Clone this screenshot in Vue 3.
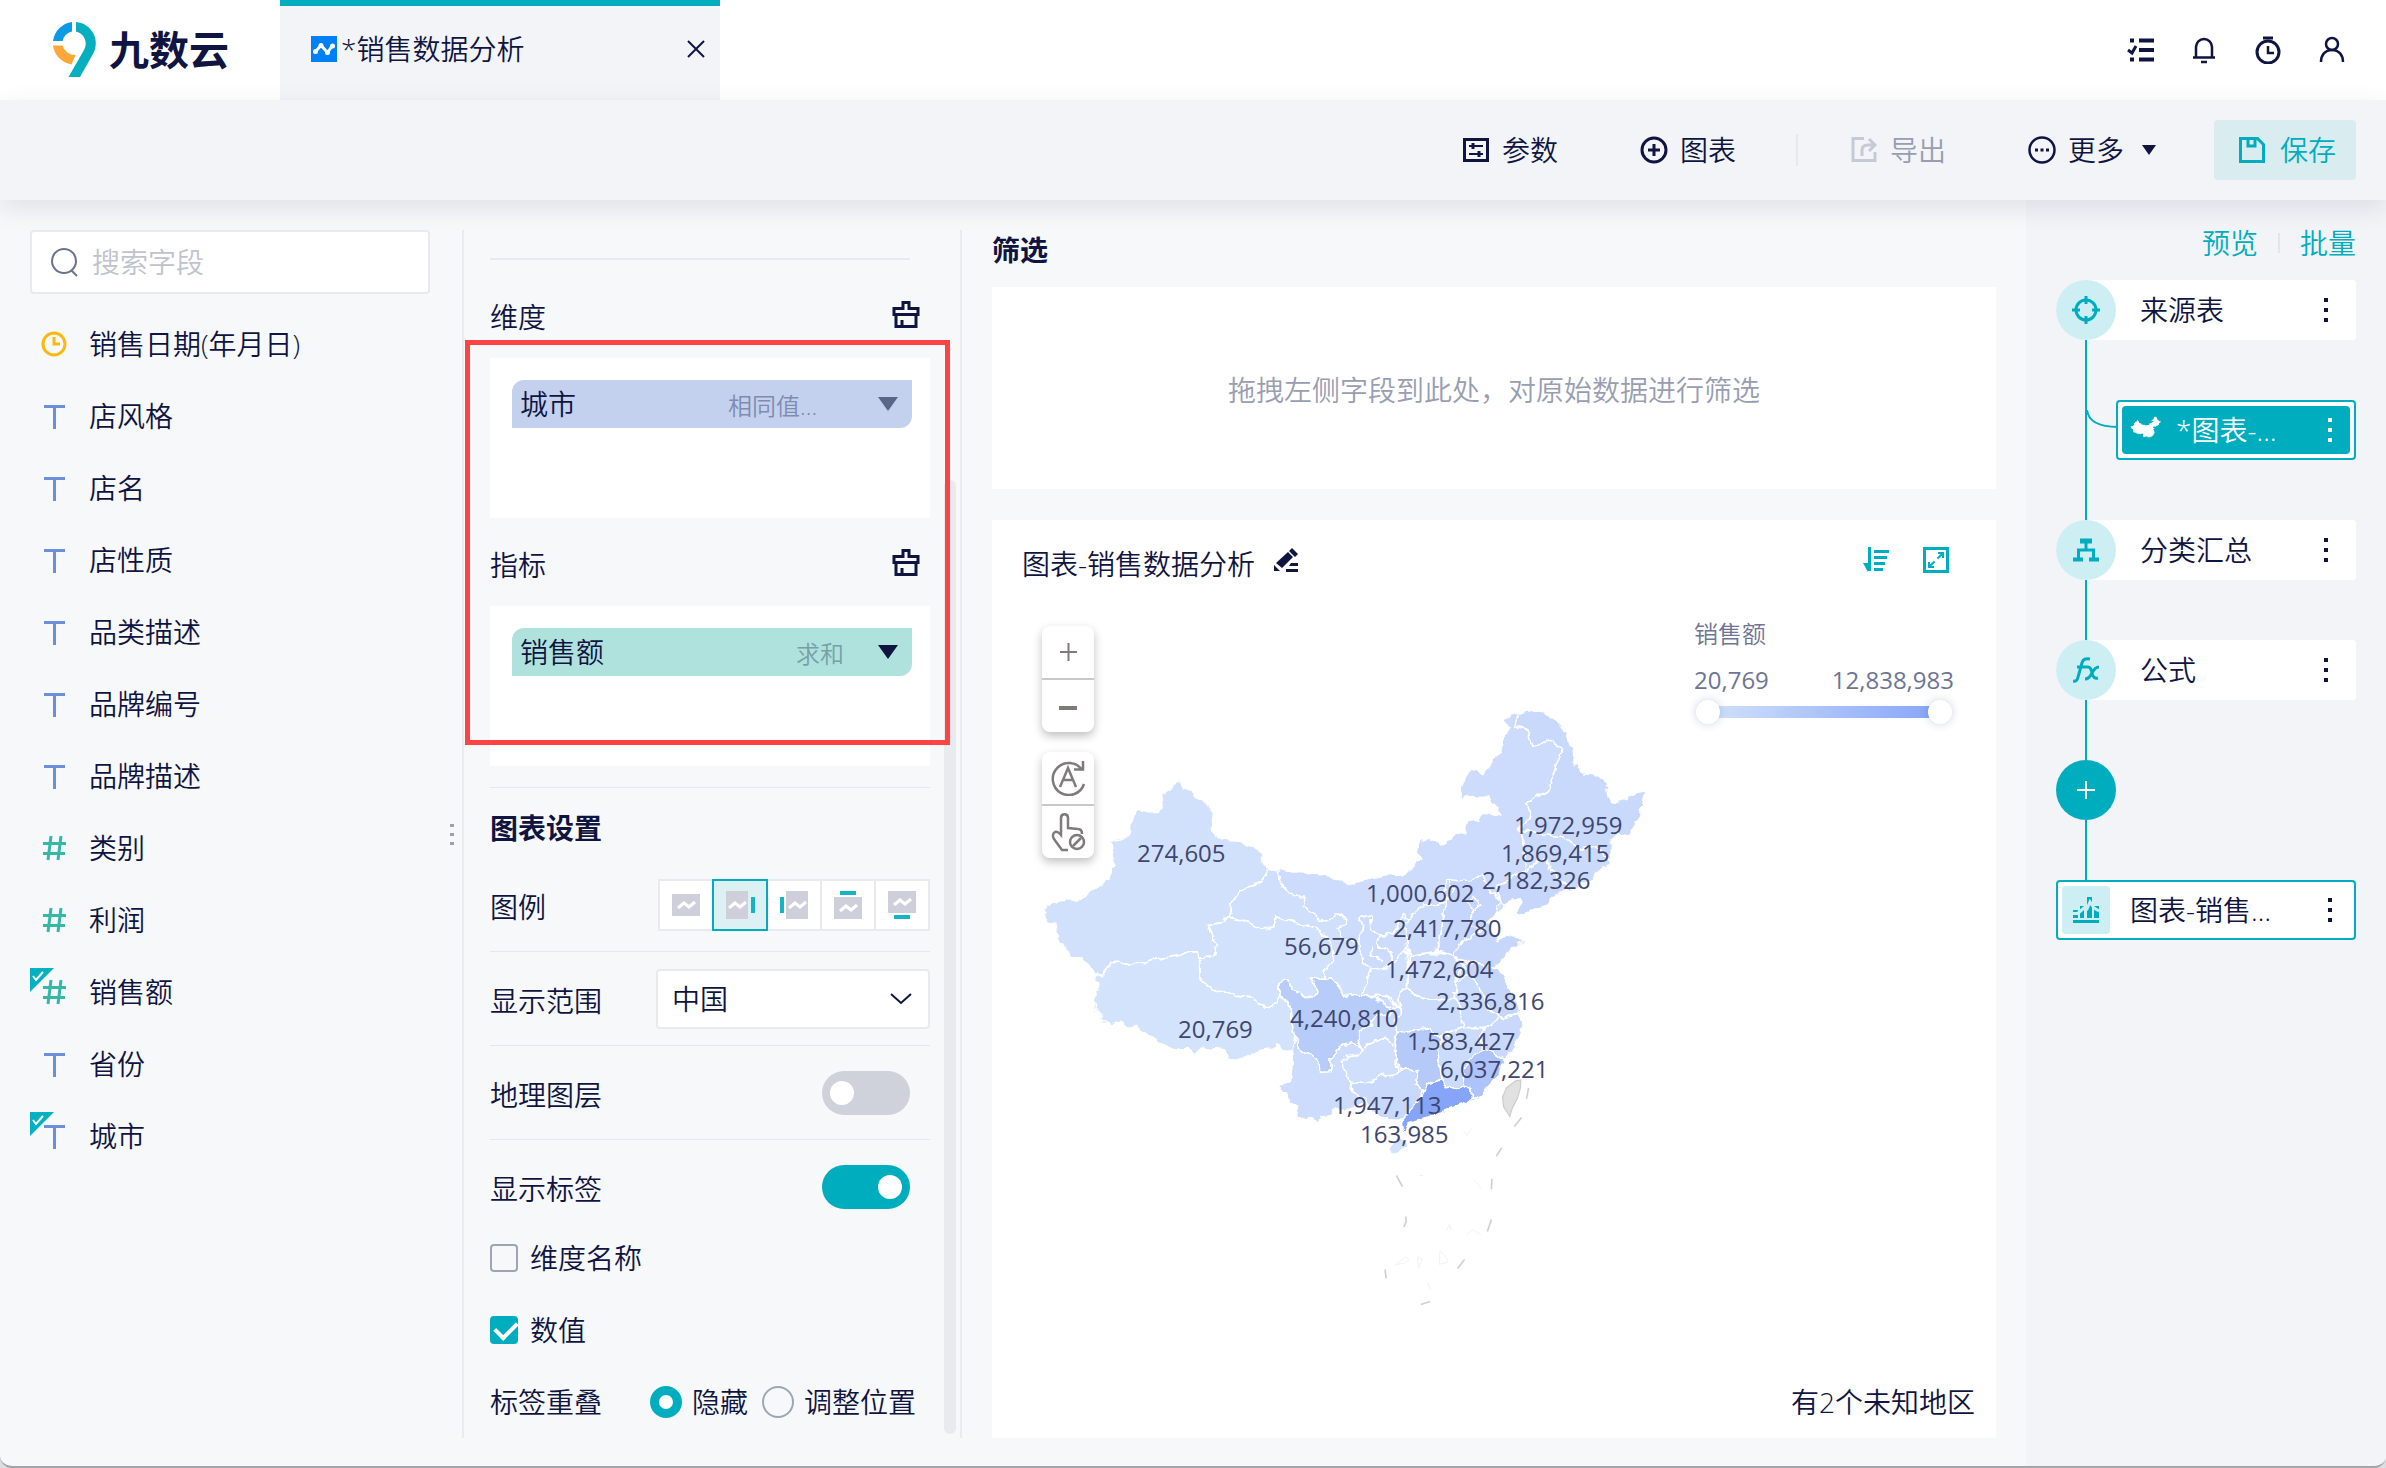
<script setup>
import { ref } from 'vue'

const fields = [
  { name: '销售日期(年月日)', type: 'date' },
  { name: '店风格', type: 'text' },
  { name: '店名', type: 'text' },
  { name: '店性质', type: 'text' },
  { name: '品类描述', type: 'text' },
  { name: '品牌编号', type: 'text' },
  { name: '品牌描述', type: 'text' },
  { name: '类别', type: 'number' },
  { name: '利润', type: 'number' },
  { name: '销售额', type: 'number', used: true },
  { name: '省份', type: 'text' },
  { name: '城市', type: 'text', used: true },
]

const keyword = ref('')
const region = ref('中国')
const geoLayer = ref(false)
const showLabel = ref(true)
const showDimension = ref(false)
const showValue = ref(true)
const overlap = ref('hide')
const legendPos = ref('right')
const rangeMin = ref(0)
const rangeMax = ref(100)

const legendOptions = [
  { id: 'none', label: '无图例', x: 4, y: 6, w: 28, h: 22 },
  { id: 'right', label: '右侧', x: 4, y: 3, w: 22, h: 28, bar: [29, 9, 4, 16] },
  { id: 'left', label: '左侧', x: 10, y: 3, w: 22, h: 28, bar: [4, 9, 4, 16] },
  { id: 'top', label: '上方', x: 4, y: 9, w: 28, h: 22, bar: [10, 3, 16, 4] },
  { id: 'bottom', label: '下方', x: 4, y: 3, w: 28, h: 22, bar: [10, 27, 16, 4] },
]

const outline =
  '34,548 42,528 75,515 80,522 105,517 130,500 160,485 195,462 197,435 207,430 200,400 195,368 218,360 245,358 247,330 262,292 290,298 315,297 323,285 325,255 345,243 355,222 372,222 378,238 405,262 425,268 440,290 450,305 443,345 455,358 480,366 515,368 540,382 565,400 575,425 583,440 605,442 650,448 700,446 750,465 790,478 820,468 870,457 915,455 935,435 965,410 952,395 958,368 985,372 1005,382 1025,368 1065,350 1080,325 1110,310 1150,308 1156,300 1145,285 1120,260 1090,258 1060,266 1053,255 1060,235 1078,198 1105,205 1140,180 1145,155 1165,118 1178,85 1162,78 1180,60 1200,55 1240,48 1275,62 1300,78 1315,105 1328,150 1338,190 1355,203 1385,205 1415,238 1422,268 1455,272 1480,255 1512,248 1495,300 1470,358 1440,350 1425,370 1425,430 1400,440 1380,465 1355,475 1335,490 1300,495 1260,530 1230,538 1195,552 1190,545 1208,520 1200,508 1180,520 1160,530 1150,545 1125,565 1130,590 1145,612 1165,600 1190,605 1215,615 1212,622 1185,632 1160,655 1140,680 1165,705 1180,745 1195,775 1200,795 1185,805 1205,815 1213,820 1200,835 1195,860 1175,890 1160,910 1150,940 1130,962 1105,990 1080,1010 1040,1025 1000,1040 960,1050 925,1062 918,1082 912,1085 908,1060 912,1050 890,1050 860,1048 835,1030 820,1010 785,1022 750,1030 740,1040 710,1045 705,1060 695,1047 675,1052 655,1045 660,1020 640,1010 618,985 617,970 640,955 645,920 640,885 620,885 608,872 585,880 555,885 520,905 485,908 478,885 460,880 425,878 405,895 400,882 365,882 330,870 295,850 260,825 240,830 220,815 200,822 180,810 165,792 155,775 152,755 165,745 158,710 160,697 143,680 140,665 120,655 100,655 90,632 65,617 67,600 60,575 40,570'

const provinces = [
  { fill: '#d1e1fb', d: '34,548 42,528 75,515 105,517 160,485 195,462 197,435 207,430 200,400 195,368 245,358 247,330 262,292 290,298 315,297 323,285 325,255 345,243 355,222 372,222 378,238 405,262 425,268 440,290 450,305 443,345 455,358 480,366 515,368 540,382 565,400 583,440 578,460 555,468 520,490 497,520 490,555 470,570 435,578 447,600 445,615 460,625 450,635 455,650 418,655 415,642 380,642 340,655 290,668 245,672 215,665 190,678 180,697 160,697 143,680 140,665 100,655 90,632 65,617 67,600 60,575 40,570' },
  { fill: '#d3e3fc', d: '160,697 180,697 190,678 215,665 245,672 290,668 340,655 380,642 415,642 420,710 445,735 500,748 545,752 575,778 608,768 608,745 635,770 640,800 648,850 640,885 620,885 608,872 585,880 555,885 520,905 485,908 478,885 425,878 405,895 400,882 365,882 330,870 295,850 260,825 240,830 220,815 200,822 165,792 152,755 165,745 158,710' },
  { fill: '#d3e2fc', d: '435,578 470,570 490,555 530,570 580,585 600,580 600,555 640,565 680,580 735,605 745,640 740,665 720,690 722,710 690,705 705,730 700,745 670,752 640,730 628,710 608,715 608,768 575,778 545,752 500,748 445,735 420,710 418,655 455,650 450,635 460,625 445,615 447,600' },
  { fill: '#d0dffb', d: '583,440 605,442 618,480 645,505 675,505 670,530 700,550 710,568 740,555 770,548 772,575 755,590 770,610 808,612 812,650 815,672 835,680 830,710 815,752 770,745 740,705 722,710 720,690 740,665 745,640 735,605 680,580 640,565 600,555 600,580 580,585 530,570 490,555 497,520 520,490 555,468 578,460' },
  { fill: '#c9d9fb', d: '1200,55 1240,48 1275,62 1300,78 1315,105 1328,150 1338,190 1355,203 1385,205 1415,238 1422,268 1455,272 1480,255 1512,248 1495,300 1470,358 1440,350 1425,370 1425,430 1385,385 1350,390 1320,370 1285,358 1230,350 1200,340 1230,305 1215,280 1270,245 1285,200 1303,150 1285,125 1230,135 1222,105 1188,85' },
  { fill: '#cadafb', d: '1200,340 1230,350 1285,358 1320,370 1350,390 1385,385 1425,420 1425,430 1400,440 1380,465 1355,475 1335,490 1300,470 1260,415 1215,440 1210,380' },
  { fill: '#c7d7fb', d: '1215,440 1260,415 1300,470 1335,490 1300,495 1260,530 1195,552 1190,545 1208,520 1200,508 1160,530 1150,520 1145,480 1180,460' },
  { fill: '#c5d5fb', d: '1020,520 1040,490 1030,465 1080,470 1105,450 1120,470 1150,520 1145,545 1125,565 1110,595 1080,600 1050,625 1040,650 1000,640 1010,580' },
  { fill: '#cbdbfb', d: '925,560 960,530 1020,520 1010,580 1000,640 930,650 920,600' },
  { fill: '#c7d7fb', d: '1040,650 1050,625 1080,600 1110,595 1125,570 1145,612 1165,600 1215,615 1185,632 1160,655 1140,680 1085,670' },
  { fill: '#cddcfb', d: '930,650 1000,645 1040,650 1060,670 1045,710 1040,755 1000,760 950,750 925,730' },
  { fill: '#c6d6fb', d: '1060,670 1085,670 1140,680 1165,705 1180,745 1195,775 1200,795 1150,805 1120,780 1110,740 1080,700' },
  { fill: '#cbdbfb', d: '1045,710 1080,700 1110,740 1120,780 1150,805 1115,830 1060,830 1060,800 1040,755' },
  { fill: '#cbdbfb', d: '905,740 925,730 950,750 1000,760 1040,755 1060,800 1060,830 1005,850 980,830 900,840 890,820 905,800 905,775' },
  { fill: '#cfdffc', d: '838,685 870,680 925,640 925,730 905,740 905,775 870,750 815,752 830,710' },
  { fill: '#cad9fb', d: '1115,830 1150,805 1200,795 1213,820 1195,860 1160,910 1120,880 1110,885 1100,850' },
  { fill: '#cbdbfb', d: '1005,850 1060,830 1115,830 1100,850 1110,885 1090,890 1065,930 1060,970 1020,975 1010,955 1000,890' },
  { fill: '#cddcfb', d: '880,775 905,775 905,800 890,820 900,840 895,880 870,850 830,865 810,885 805,838 830,825 850,800 890,790' },
  { fill: '#b8ccf9', d: '608,715 628,710 640,730 670,752 700,745 705,730 690,705 720,710 740,705 770,745 815,752 845,755 880,775 890,790 850,800 830,825 805,838 810,885 795,865 765,868 740,900 740,930 717,932 690,895 660,875 655,860 648,850 640,800 635,770 608,745' },
  { fill: '#cfdffc', d: '760,905 800,895 830,865 870,850 895,880 900,940 870,945 820,965 785,970 775,935' },
  { fill: '#c9d9fb', d: '785,970 820,965 870,945 900,940 905,925 950,935 945,965 965,980 950,1010 930,1035 912,1050 860,1048 835,1030 820,1000 790,985' },
  { fill: '#b6caf9', d: '900,840 930,835 980,830 1005,850 1000,890 1010,955 975,965 965,980 945,965 950,935 905,925 895,880' },
  { fill: '#aec3f9', d: '1090,890 1120,880 1160,910 1150,940 1130,962 1105,990 1082,1000 1080,980 1060,970 1065,930' },
  { fill: '#86a4f8', d: '965,980 975,965 1010,955 1020,975 1060,970 1080,980 1082,1000 1070,1015 1040,1025 1000,1040 925,1062 918,1082 910,1085 908,1060 930,1035 950,1010' },
  { fill: '#d2e1fc', d: '885,1108 905,1100 925,1105 925,1120 905,1137 885,1130' },
]

const borders = [
  '770,610 808,612 815,560 835,553 838,585 855,600 850,625 880,645 880,680 838,685',
  '855,600 890,600 912,550 925,560',
  '835,625 838,650 865,665',
  '1020,520 1020,470 1030,465',
  '1070,520 1085,500 1105,530 1085,545 1070,520',
  '1085,545 1080,580 1110,595',
  '1150,520 1145,480 1180,460 1215,440',
]

const dashes = [
  '1222,975 1217,1002', '1205,1048 1187,1070', '1156,1122 1143,1143', '1132,1198 1131,1224',
  '1131,1298 1121,1327', '1065,1396 1048,1418', '958,1506 981,1499', '870,1420 873,1442',
  '921,1290 922,1303 916,1316', '898,1190 913,1217',
]

const labels = [
  { t: '274,605', x: 107, y: 172 },
  { t: '1,972,959', x: 484, y: 144 },
  { t: '1,869,415', x: 471, y: 172 },
  { t: '2,182,326', x: 452, y: 199 },
  { t: '1,000,602', x: 336, y: 212 },
  { t: '2,417,780', x: 363, y: 247 },
  { t: '56,679', x: 254, y: 265 },
  { t: '1,472,604', x: 355, y: 288 },
  { t: '2,336,816', x: 406, y: 320 },
  { t: '4,240,810', x: 260, y: 337 },
  { t: '20,769', x: 148, y: 348 },
  { t: '1,583,427', x: 377, y: 360 },
  { t: '6,037,221', x: 410, y: 388 },
  { t: '1,947,113', x: 303, y: 424 },
  { t: '163,985', x: 330, y: 453 },
]
</script>

<template>
  <div class="app">
    <header class="topbar">
      <div class="logo">
        <svg width="44" height="56" viewBox="0 0 44 56">
          <path d="M19 0v9.500a13 13 0 0 0-9.500 9.500H0A22 22 0 0 1 19 0Z" fill="#0a9ae6" />
          <path d="M0 23.500h9.500A13 13 0 0 0 22.500 33l-4 9.500A22 22 0 0 1 0 23.500Z" fill="#fba73a" />
          <path d="M23 0a21.500 21.500 0 0 1 17 32L27 55H15.500L31 28a12.500 12.500 0 0 0-8-18.500Z" fill="#06afbf" />
        </svg>
        <span>九数云</span>
      </div>
      <div class="tab">
        <svg width="26" height="26" viewBox="0 0 26 26">
          <path d="M0 0h26v26H0z" fill="#0080f5" />
          <path d="M4.500 15.500 10 9.500l6.500 7 5-7" fill="none" stroke="#fff" stroke-width="3" stroke-linejoin="round" />
          <g fill="#fff"><circle cx="4.500" cy="15.500" r="2.500" /><circle cx="10" cy="9.500" r="2.500" /><circle cx="16.500" cy="16.500" r="2.500" /><circle cx="21.500" cy="10" r="2.500" /></g>
        </svg>
        <span>*销售数据分析</span>
        <button class="close" aria-label="关闭">
          <svg width="20" height="20" viewBox="0 0 20 20" fill="none" stroke="currentColor" stroke-width="2"><path d="M2 2l16 16M18 2 2 18" /></svg>
        </button>
      </div>
      <nav class="top-icons">
        <button aria-label="任务">
          <svg width="28" height="28" viewBox="0 0 28 28" fill="none" stroke="currentColor" stroke-width="4"><path d="M13 4.500h15M13 14h15M13 23.500h15M4 4.500h4M4 23.500h4" /><path d="m2 14 4 3 4-7" stroke-width="3" /></svg>
        </button>
        <button aria-label="通知">
          <svg width="28" height="28" viewBox="0 0 28 28" fill="none" stroke="currentColor" stroke-width="2.500"><path d="M6 21v-10a8 8 0 0 1 16 0v10M3 21.500h22M11 26h6" /></svg>
        </button>
        <button aria-label="定时">
          <svg width="28" height="28" viewBox="0 0 28 28" fill="none" stroke="currentColor" stroke-width="2.500"><circle cx="14" cy="16" r="11" stroke-width="3" /><path d="M9 2h10" stroke-width="3" /><path d="M14 10v7h6" /></svg>
        </button>
        <button aria-label="用户">
          <svg width="28" height="28" viewBox="0 0 28 28" fill="none" stroke="currentColor" stroke-width="2.500"><circle cx="14" cy="8" r="6" /><path d="M3 26c0-7 4-12 11-12s11 5 11 12" /></svg>
        </button>
      </nav>
    </header>

    <div class="toolbar">
      <button class="tool">
        <svg width="28" height="28" viewBox="0 0 28 28" fill="none" stroke="currentColor" stroke-width="3"><path d="M2.500 3.500h23v21h-23z" /><path d="M7 10h14M7 18h14" stroke-width="2" /><path d="M11 7v6M17 15v6" /></svg>
        <span>参数</span>
      </button>
      <button class="tool tool-chart">
        <svg width="28" height="28" viewBox="0 0 28 28" fill="none" stroke="currentColor" stroke-width="3"><circle cx="14" cy="14" r="12" /><path d="M8 14h12M14 8v12" /></svg>
        <span>图表</span>
      </button>
      <i class="sep"></i>
      <button class="tool tool-export" disabled>
        <svg width="28" height="28" viewBox="0 0 28 28" fill="none" stroke="#c6cad6" stroke-width="3"><path d="M14 2.500H3v22h22V16" /><path d="M12 20v-6q0-5 6-5h6M19 3l6 6-6 6" /></svg>
        <span>导出</span>
      </button>
      <button class="tool tool-more">
        <svg width="28" height="28" viewBox="0 0 28 28" fill="none" stroke="currentColor" stroke-width="2.500"><circle cx="14" cy="14" r="12.500" /><path d="M7 14h3M12.500 14h3M18 14h3" stroke-width="3" /></svg>
        <span>更多</span>
        <svg class="caret" width="14" height="10" viewBox="0 0 14 10"><path d="M0 0h14L7 10z" fill="currentColor" /></svg>
      </button>
      <button class="save">
        <svg width="28" height="28" viewBox="0 0 28 28" fill="none" stroke="currentColor" stroke-width="3"><path d="M2.500 2.500h17l6 6v17h-23z" /><path d="M10 3v7h7V3" /></svg>
        <span>保存</span>
      </button>
    </div>

    <main class="body">
      <aside class="fields">
        <label class="search">
          <svg width="30" height="30" viewBox="0 0 30 30" fill="none" stroke="#6b728e" stroke-width="2"><circle cx="14" cy="14" r="12" /><path d="m21 23 6 6" /></svg>
          <input v-model="keyword" type="text" placeholder="搜索字段" aria-label="搜索字段" />
        </label>
        <ul>
          <li v-for="f in fields" :key="f.name">
            <svg v-if="f.used" class="badge" width="24" height="24" viewBox="0 0 24 24"><path d="M0 0h24L0 24z" fill="#05b0c0" /><path d="m3 8 3 4 7-8" fill="none" stroke="#fff" stroke-width="2" /></svg>
            <svg v-if="f.type === 'date'" class="glyph" width="26" height="26" viewBox="0 0 26 26" fill="none" stroke="#fcb90d" stroke-width="3"><circle cx="13" cy="13" r="11" /><path d="M13 6v7h6" /></svg>
            <svg v-else-if="f.type === 'text'" class="glyph" width="26" height="26" viewBox="0 0 26 26" fill="none" stroke="#6b8fdc" stroke-width="3"><path d="M3 3.500h21" /><path d="M13.500 3v23" /></svg>
            <svg v-else class="glyph" width="26" height="26" viewBox="0 0 26 26" fill="none" stroke="#35b8a6" stroke-width="3"><path d="M2 8.500h23M2 18.500h22M10 1 7 25M20 1l-3 24" /></svg>
            <span>{{ f.name }}</span>
          </li>
        </ul>
        <div class="grip"><i></i><i></i><i></i></div>
      </aside>

      <section class="config">
        <hr class="top-line" />
        <template v-for="zone in [{ title: '维度', field: '城市', agg: '相同值…', cls: 'dim' }, { title: '指标', field: '销售额', agg: '求和', cls: 'metric' }]" :key="zone.title">
          <div class="zone-head">
            <span>{{ zone.title }}</span>
            <button aria-label="清空">
              <svg width="28" height="28" viewBox="0 0 28 28" fill="none" stroke="currentColor" stroke-width="3"><path d="M11 7.500v-6h6v6h9v6H2v-6zM4 13.500v12h20v-12M10 25v-6" /></svg>
            </button>
          </div>
          <div class="zone">
            <div class="chip" :class="zone.cls">
              <span>{{ zone.field }}</span>
              <small>{{ zone.agg }}</small>
              <button aria-label="展开"><svg width="20" height="14" viewBox="0 0 20 14"><path d="M0 0h20L10 14z" fill="currentColor" /></svg></button>
            </div>
          </div>
        </template>

        <div class="settings">
          <h2>图表设置</h2>
          <div class="row">
            <span class="name">图例</span>
            <div class="legend-pos">
              <button v-for="o in legendOptions" :key="o.id" :aria-label="o.label" :class="{ active: legendPos === o.id }" @click="legendPos = o.id">
                <svg width="36" height="34" viewBox="0 0 36 34">
                  <rect :x="o.x" :y="o.y" :width="o.w" :height="o.h" fill="#cfcfdb" />
                  <path :d="`M${o.x + o.w / 2 - 8} ${o.y + o.h / 2 + 3}l6-5 5 4 6-5`" fill="none" stroke="#fff" stroke-width="3" />
                  <rect v-if="o.bar" :x="o.bar[0]" :y="o.bar[1]" :width="o.bar[2]" :height="o.bar[3]" fill="#14b4c4" />
                </svg>
              </button>
            </div>
          </div>
          <div class="row">
            <label class="name" for="region">显示范围</label>
            <div class="select">
              <select id="region" v-model="region"><option>中国</option></select>
              <svg width="22" height="12" viewBox="0 0 22 12" fill="none" stroke="currentColor" stroke-width="2"><path d="m1 1 10 9L21 1" /></svg>
            </div>
          </div>
          <div class="row">
            <label class="name" for="geo">地理图层</label>
            <input id="geo" v-model="geoLayer" class="switch" type="checkbox" role="switch" />
          </div>
          <div class="row last">
            <label class="name" for="show">显示标签</label>
            <input id="show" v-model="showLabel" class="switch" type="checkbox" role="switch" />
          </div>
          <label class="check"><input v-model="showDimension" type="checkbox" /><span>维度名称</span></label>
          <label class="check"><input v-model="showValue" type="checkbox" /><span>数值</span></label>
          <div class="overlap">
            <span>标签重叠</span>
            <label><input v-model="overlap" type="radio" name="overlap" value="hide" />隐藏</label>
            <label><input v-model="overlap" type="radio" name="overlap" value="move" />调整位置</label>
          </div>
        </div>
        <div class="scrollbar"></div>
        <div class="highlight"></div>
      </section>

      <section class="center">
        <h2>筛选</h2>
        <div class="filter">拖拽左侧字段到此处，对原始数据进行筛选</div>
        <div class="card">
          <div class="card-head">
            <span>图表-销售数据分析</span>
            <button aria-label="重命名">
              <svg width="26" height="26" viewBox="0 0 26 26" fill="currentColor"><path d="m3 16 12-11 5 5L9 21zM1 18l6 6H1zM16 4l3-3 6 6-3 3zM18 16h7v3h-9zM13 22h12v3H13z" /></svg>
            </button>
            <button class="sort" aria-label="排序">
              <svg width="26" height="26" viewBox="0 0 26 26" fill="none" stroke="currentColor" stroke-width="3"><path d="M6.500 0v24" /><path d="M0 16h5v9z" fill="currentColor" stroke="none" /><path d="M11 4.500h15M11 10.500h13M11 16.500h11M11 22.500h9" /></svg>
            </button>
            <button class="full" aria-label="全屏">
              <svg width="26" height="26" viewBox="0 0 26 26" fill="none" stroke="currentColor"><path d="M1.500 1.500h23v23h-23z" stroke-width="3" /><path d="m14.500 11.500 6-6M15 6h5v5M11.500 14.500l-6 6M6 15v5h5" stroke-width="2" /></svg>
            </button>
          </div>
          <div class="canvas">
            <svg class="map" width="640" height="640" viewBox="0 0 640 640">
              <filter id="coast" x="-5%" y="-5%" width="110%" height="110%">
                <feTurbulence type="fractalNoise" baseFrequency="0.09" numOctaves="3" seed="4" />
                <feDisplacementMap in="SourceGraphic" scale="9" xChannelSelector="R" yChannelSelector="G" />
              </filter>
              <g filter="url(#coast)">
                <g transform="scale(0.408)" stroke-linejoin="round">
                  <polygon :points="outline" fill="#cddcfc" />
                  <polygon v-for="(p, i) in provinces" :key="i" :points="p.d" :fill="p.fill" stroke="#fff" stroke-width="4" />
                  <polyline v-for="b in borders" :key="b" :points="b" fill="none" stroke="#fff" stroke-width="4" />
                </g>
              </g>
              <g transform="scale(0.408)">
                <path d="M1190 958 1203 956 1202 975 1195 1000 1182 1025 1176 1045 1161 1022 1158 998 1168 975Z" fill="#e1e1e1" stroke="#cdcdcd" stroke-width="3" />
                <polyline v-for="d in dashes" :key="d" :points="d" fill="none" stroke="#d0d0d0" stroke-width="4" />
                <g fill="none" stroke="#eee" stroke-width="2"><path d="m895 1410 15-12 10-8 10 6-12 8zM950 1390l12 5-10 22zM1005 1375l15 15 5 12-22 6zM1070 1335l15-12 20 12M1020 1325l8-15 4 14M1088 1200l18 22M955 1190h8M975 1452l6 18M1062 1080l10 12 10-18" /></g>
              </g>
              <g class="labels"><text v-for="l in labels" :key="l.t" :x="l.x" :y="l.y">{{ l.t }}</text></g>
            </svg>
            <div class="map-tools">
              <div class="group">
                <button aria-label="放大"><svg width="20" height="20" viewBox="0 0 20 20" fill="none" stroke="currentColor" stroke-width="2"><path d="M2 10h17M10.500 1v18" /></svg></button>
                <button aria-label="缩小"><svg width="20" height="20" viewBox="0 0 20 20" fill="none" stroke="currentColor" stroke-width="4"><path d="M1 12h18" /></svg></button>
              </div>
              <div class="group">
                <button aria-label="重置视图"><svg width="36" height="36" viewBox="0 0 36 36" fill="none" stroke="currentColor" stroke-width="2.500"><path d="M32 10A16 16 0 1 0 34 24M33 1v8.500h-9" /><path d="m10 27 8-19 8 19M13 20h10" /></svg></button>
                <button aria-label="禁止拖动"><svg width="36" height="40" viewBox="0 0 36 40" fill="none" stroke="currentColor" stroke-width="2.500"><path d="M18 38h-6L4 27c-2-3-1-6 1-7 3-1 4 1 6 3V6c0-5 7-5 7 0v10l10 1q4 0 4 5" /><circle cx="27" cy="30" r="7" /><path d="m23 34 8-8" /></svg></button>
              </div>
            </div>
            <div class="legend">
              <span>销售额</span>
              <div class="ends"><span>20,769</span><span>12,838,983</span></div>
              <div class="range">
                <input v-model="rangeMin" type="range" min="0" max="100" aria-label="最小值" />
                <input v-model="rangeMax" type="range" min="0" max="100" aria-label="最大值" />
              </div>
            </div>
          </div>
          <div class="note">有2个未知地区</div>
        </div>
      </section>

      <aside class="flow">
        <div class="links"><button>预览</button><i></i><button>批量</button></div>
        <div class="steps">
          <div class="step">
            <span class="dot"><svg width="28" height="28" viewBox="0 0 28 28" fill="none" stroke="currentColor" stroke-width="3"><circle cx="14" cy="14" r="10" /><path d="M14 0v8M14 20v8M0 14h8M20 14h8" /></svg></span>
            <b>来源表</b><button class="kebab" aria-label="操作"><i></i><i></i><i></i></button>
          </div>
          <div class="step child">
            <svg class="branch" width="32" height="20" viewBox="0 0 32 20" fill="none" stroke="#00adbe" stroke-width="2"><path d="M1 0q2 17 31 17" /></svg>
            <div class="child-inner">
              <svg width="32" height="32" viewBox="0 0 1568 1400" fill="#fff"><polygon :points="outline" /></svg>
              <b>*图表-…</b><button class="kebab" aria-label="操作"><i></i><i></i><i></i></button>
            </div>
          </div>
          <div class="step">
            <span class="dot"><svg width="26" height="26" viewBox="0 0 26 26" fill="none" stroke="currentColor" stroke-width="3"><path d="M7 4h12" stroke-width="5" /><path d="M13 5v7M5.500 22v-9h15v9" /><path d="M0 22.500h10M16 22.500h10" stroke-width="4" /></svg></span>
            <b>分类汇总</b><button class="kebab" aria-label="操作"><i></i><i></i><i></i></button>
          </div>
          <div class="step">
            <span class="dot"><svg width="26" height="26" viewBox="0 0 26 26" fill="none" stroke="currentColor" stroke-width="3"><path d="M0 24q4 1 5-4L9 6q1-5 8-4M4 10h11" /><path d="M12 22q4 0 7-6t7-6M15 10q3 0 4 6t6 5" /></svg></span>
            <b>公式</b><button class="kebab" aria-label="操作"><i></i><i></i><i></i></button>
          </div>
          <button class="add" aria-label="添加步骤"><svg width="20" height="20" viewBox="0 0 20 20" stroke="#fff" stroke-width="2"><path d="M1 10h18M10 1v18" /></svg></button>
          <div class="step result">
            <span class="thumb"><svg width="26" height="26" viewBox="0 0 26 26" fill="currentColor"><path d="M0 23h26v3H0zM0 18h5v3H0zM0 13h5v2H0zM7 9h4v12H7zM14 0h5v21h-5zM21 9h5v12h-5z" /><path d="M4 17 11 11l3 1 3-7 4 6 5 3" fill="none" stroke="#cdeef2" stroke-width="3" /></svg></span>
            <b>图表-销售…</b><button class="kebab" aria-label="操作"><i></i><i></i><i></i></button>
          </div>
        </div>
      </aside>
    </main>
  </div>
</template>

<style>
body {
  background: #dcdde1;
}
</style>

<style scoped>
.app {
  display: flex;
  flex-direction: column;
  box-sizing: border-box;
  min-height: 100vh;
  overflow: hidden;
  background: #f7f8fa;
  border-bottom: 2px solid #a3a4a8;
  border-radius: 0 0 12px 12px;
  color: #0f1441;
  font-family: "Open Sans", "Noto Sans CJK SC", sans-serif;
  font-size: 28px;
  font-weight: 350;
  line-height: 40px;
}
* { box-sizing: border-box; }
button {
  display: flex;
  align-items: center;
  padding: 0;
  border: 0;
  background: none;
  color: inherit;
  font: inherit;
  cursor: pointer;
}
svg { display: block; flex: none; }
h2 { margin: 0; font-size: 28px; font-weight: 700; line-height: 40px; }
b { font-weight: inherit; }
ul { margin: 0; padding: 0; list-style: none; }

.topbar { display: flex; height: 100px; background: #fff; }
.logo { display: flex; align-items: center; gap: 12px; width: 280px; padding-left: 53px; font-size: 40px; font-weight: 700; }
.tab { display: flex; align-items: center; gap: 4px; width: 440px; padding: 0 14px 8px 31px; border-top: 6px solid #00adbe; background: #f2f4f8; }
.close { margin-left: auto; }
.top-icons { display: flex; align-items: center; gap: 36px; margin-left: auto; padding-right: 40px; }

.toolbar { position: relative; display: flex; align-items: center; justify-content: flex-end; height: 100px; padding-right: 30px; background: #f2f4f8; box-shadow: 0 8px 24px rgba(20, 25, 60, 0.1); }
.tool { gap: 12px; }
.tool-chart { margin-left: 82px; }
.sep { width: 2px; height: 32px; margin: 0 52px 0 60px; background: #e6e8ed; }
.tool-export { color: #989db2; }
.tool-more { margin-left: 82px; margin-right: 58px; }
.tool-more .caret { margin-left: 6px; }
.save { justify-content: flex-end; gap: 14px; width: 142px; height: 60px; padding-right: 20px; border-radius: 4px; background: #d9ecf0; color: #00adbe; }

.body { display: flex; flex: 1; }
.fields { position: relative; width: 464px; margin: 30px 0 28px; border-right: 2px solid #e9ebef; }
.search { display: flex; align-items: center; gap: 10px; width: 400px; height: 64px; margin-left: 30px; padding-left: 18px; border: 2px solid #e8eaee; border-radius: 4px; background: #fff; }
.search input { width: 100%; border: 0; outline: 0; background: none; color: inherit; font: inherit; }
.search input::placeholder { color: #c0c3ce; opacity: 1; }
.fields ul { padding-top: 14px; }
.fields li { position: relative; display: flex; align-items: center; gap: 22px; height: 72px; padding-left: 41px; }
.badge { position: absolute; left: 30px; top: 12px; }
.grip { position: absolute; right: 8px; top: 594px; display: grid; gap: 6px; }
.grip i { width: 4px; height: 3px; background: #9a9fb3; }

.config { position: relative; width: 498px; margin: 30px 0 28px; padding: 28px 30px 0 26px; border-right: 2px solid #e9ebef; }
.top-line { width: 420px; height: 2px; margin: 0 0 34px; border: 0; background: #e8eaee; }
.zone-head { display: flex; align-items: center; justify-content: space-between; height: 46px; padding-right: 10px; margin-bottom: 18px; }
.zone-head button { padding-bottom: 4px; }
.zone { height: 160px; margin-bottom: 24px; padding: 22px 18px 0 22px; background: #fff; }
.chip { display: flex; align-items: center; height: 48px; padding: 0 14px 0 8px; border-radius: 12px 0; }
.chip small { margin-left: auto; margin-right: 34px; padding-top: 4px; color: #7f8bb0; font-size: 24px; }
.dim { background: #c3d1ee; }
.dim small { width: 116px; }
.dim button { color: #5a658a; }
.metric { background: #b0e2dd; }
.metric small { color: #76a0a8; }
.settings { margin-top: -3px; border-top: 1px solid #e5e7eb; }
.settings h2 { padding: 20px 0 10px; }
.row { display: flex; align-items: center; justify-content: space-between; height: 94px; border-bottom: 1px solid #e5e7eb; }
.name { padding-top: 4px; }
.row.last { height: 82px; padding-top: 12px; border: 0; }
.legend-pos { display: flex; width: 272px; }
.legend-pos button { justify-content: center; flex: 1; height: 52px; margin-right: -2px; border: 2px solid #e8eaee; background: #fff; }
.legend-pos button:last-child { margin-right: 0; }
.legend-pos .active { z-index: 1; border-color: #00adbe; background: #ddf1f5; }
.select { position: relative; width: 274px; }
.select select { width: 100%; height: 60px; padding: 0 14px; border: 2px solid #e8eaee; border-radius: 4px; appearance: none; background: #fff; color: inherit; font: inherit; }
.select svg { position: absolute; right: 18px; top: 24px; pointer-events: none; }
.switch { width: 88px; height: 44px; margin: 0 20px 0 0; padding: 10px 8px; border-radius: 22px; appearance: none; background: #cfd2da; }
.switch::before { content: ""; display: block; width: 24px; height: 24px; border-radius: 50%; background: #fff; }
.switch:checked { background: #00adbe; }
.switch:checked::before { margin-left: auto; }
.check { display: flex; align-items: center; gap: 12px; height: 72px; }
.check input { width: 28px; height: 28px; margin: 0; border: 2px solid #9da5b4; border-radius: 4px; appearance: none; }
.check input:checked { border-color: #00adbe; background: #00adbe; }
.check input:checked::before { content: ""; display: block; width: 18px; height: 10px; margin: 3px 0 0 3px; border: solid #fff; border-width: 0 0 4px 4px; transform: rotate(-45deg); }
.overlap { display: flex; align-items: center; height: 72px; white-space: nowrap; }
.overlap > span { width: 160px; }
.overlap label { display: flex; align-items: center; gap: 10px; margin-right: 14px; }
.overlap input { width: 32px; height: 32px; margin: 0; border: 2px solid #9da5b4; border-radius: 50%; appearance: none; }
.overlap input:checked { border: 9px solid #00adbe; background: #fff; }
.scrollbar { position: absolute; right: 4px; top: 250px; bottom: 4px; width: 12px; border-radius: 6px; background: #e8eaee; }
.highlight { position: absolute; left: 1px; right: 10px; top: 110px; height: 405px; border: 5px solid #fc4345; pointer-events: none; }

.center { display: flex; flex-direction: column; flex: 1; padding: 30px 30px 28px; }
.filter { display: flex; align-items: center; justify-content: center; height: 202px; margin: 17px 0 31px; padding-top: 4px; background: #fff; color: #989db2; }
.card { display: flex; flex-direction: column; flex: 1; background: #fff; }
.card-head { display: flex; align-items: center; gap: 18px; padding: 20px 47px 20px 30px; }
.card-head > span { padding-top: 4px; margin-bottom: -4px; }
.card-head .sort { margin-left: auto; }
.card-head .sort, .card-head .full { color: #00adbe; }
.card-head .full { margin-left: 16px; }
.canvas { position: relative; display: flex; flex: 1; align-items: flex-start; justify-content: space-between; padding: 26px 42px 0 50px; }
.map { position: absolute; left: 38px; top: 90px; }
.labels { fill: #3f466f; font-size: 24px; font-weight: 400; }
.map-tools { position: relative; display: grid; gap: 20px; color: #7f7b7b; }
.group { border-radius: 8px; background: #fff; box-shadow: 0 4px 10px rgba(0, 0, 0, 0.25); }
.group button { justify-content: center; width: 52px; height: 52px; }
.group button + button { height: 54px; border-top: 2px solid #c9c9c9; }
.legend { width: 260px; padding-top: 8px; color: #6e7493; font-size: 24px; line-height: 28px; margin-top: -14px; }
.ends { display: flex; justify-content: space-between; padding-top: 18px; font-weight: 400; }
.range { position: relative; height: 12px; margin: 12px 2px 0; background: linear-gradient(90deg, #d1e1fb, #86a4f8) center / 232px 12px no-repeat; }
.range input { position: absolute; left: 0; top: -6px; width: 100%; height: 24px; margin: 0; appearance: none; background: none; pointer-events: none; }
.range input::-webkit-slider-thumb { width: 24px; height: 24px; border-radius: 50%; appearance: none; background: #fff; box-shadow: 0 0 8px rgba(60, 80, 140, 0.25); pointer-events: auto; }
.note { padding: 0 21px 16px; text-align: right; }

.flow { width: 360px; padding: 23px 30px 0; background: #f2f4f8; }
.links { display: flex; align-items: center; justify-content: flex-end; gap: 20px; color: #00adbe; }
.links i { width: 2px; height: 20px; background: #e3e5ea; }
.steps { position: relative; display: flex; flex-direction: column; gap: 60px; margin-top: 17px; }
.steps::before { content: ""; position: absolute; left: 29px; top: 30px; bottom: 30px; width: 2px; background: #00adbe; }
.step { position: relative; display: flex; align-items: center; height: 60px; border-radius: 30px 4px 4px 30px; background: #fff; }
.step b { flex: 1; white-space: nowrap; }
.dot { display: flex; align-items: center; justify-content: center; width: 60px; height: 60px; margin-right: 24px; border-radius: 50%; background: #cdeef2; color: #00adbe; }
.kebab { display: grid; gap: 6px; justify-content: center; width: 20px; margin-right: 20px; }
.kebab i { width: 4px; height: 4px; background: currentColor; }
.child { margin-left: 60px; padding: 4px; border: 2px solid #00adbe; border-radius: 4px; }
.child-inner { display: flex; align-items: center; width: 100%; height: 48px; gap: 14px; padding-left: 8px; border-radius: 4px; background: #00adbe; color: #fff; }
.child .kebab, .result .kebab { margin-right: 10px; }
.branch { position: absolute; left: -32px; top: 8px; }
.add { position: relative; justify-content: center; width: 60px; height: 60px; border-radius: 50%; background: #00adbe; }
.result { padding: 0 4px; border: 2px solid #00adbe; border-radius: 4px; }
.thumb { display: flex; align-items: center; justify-content: center; width: 48px; height: 48px; margin-right: 20px; border-radius: 4px; background: #cdeef2; color: #00adbe; }
</style>
